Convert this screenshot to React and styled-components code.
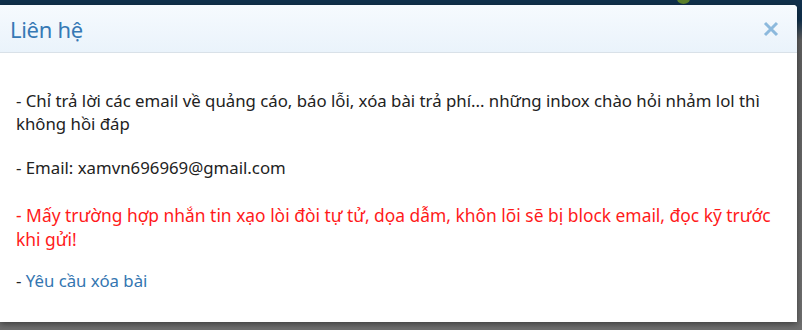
import React from "react";
import styled, { createGlobalStyle } from "styled-components";

const GlobalStyle = createGlobalStyle`
  html, body {
    margin: 0;
    padding: 0;
    background: #6d6d6d;
    font-family: "Noto Sans", "Liberation Sans", sans-serif;
  }
`;

const Page = styled.div`
  width: 802px;
  height: 330px;
  overflow: hidden;
  display: flex;
  flex-direction: column;
  background: linear-gradient(#10304c 0, #10304c 20px, #5e5e5e 40px, #6f6f6f 100%);
  position: relative;
`;

const TopBar = styled.div`
  height: 5px;
  flex: none;
  position: relative;
`;

const Avatar = styled.div`
  position: absolute;
  left: 677px;
  top: -6px;
  width: 13px;
  height: 10px;
  border-radius: 50%;
  background: #5b7f2a;
`;

const Dialog = styled.div`
  width: 797px;
  background: #fff;
  border-radius: 0 4px 0 0;
  box-shadow: 0 2px 6px rgba(0, 0, 0, 0.45);
  display: flex;
  flex-direction: column;
`;

const Header = styled.div`
  height: 47px;
  display: flex;
  align-items: center;
  justify-content: space-between;
  padding: 0 18px 0 10px;
  background: linear-gradient(#f6fafe, #eaf3fb);
  border-bottom: 1px solid #d9e1e8;
  border-radius: 0 4px 0 0;
`;

const Title = styled.h3`
  margin: 0;
  font-size: 22px;
  font-weight: 400;
  letter-spacing: -0.3px;
  color: #3679b5;
`;

const Close = styled.button`
  border: 0;
  background: none;
  padding: 0;
  width: 16px;
  height: 16px;
  display: flex;
  cursor: pointer;
`;

const Body = styled.div`
  padding: 36px 16px 30px;
  font-size: 16.8px;
  line-height: 23px;
  color: #222;
`;

const Para = styled.p`
  margin: ${(p) => (p.$warn ? "24px 0 18px" : "0 0 21px")};
  font-size: ${(p) => (p.$warn ? "17.4px" : "inherit")};
  line-height: ${(p) => (p.$warn ? "24px" : "inherit")};
  color: ${(p) => (p.$warn ? "#ff1a1a" : "#222")};
  &:last-child {
    margin-bottom: 0;
  }
`;

const Link = styled.a`
  color: #3476b1;
  text-decoration: none;
`;

export default function App() {
  return (
    <>
      <GlobalStyle />
      <Page>
        <TopBar>
          <Avatar />
        </TopBar>
        <Dialog>
          <Header>
            <Title>Liên hệ</Title>
            <Close aria-label="close">
              <svg width="16" height="16" viewBox="0 0 16 16">
                <path d="M2 2 L14 14 M14 2 L2 14" stroke="#8cb9dd" strokeWidth="3" />
              </svg>
            </Close>
          </Header>
          <Body>
            <Para>
              - Chỉ trả lời các email về quảng cáo, báo lỗi, xóa bài trả phí... những inbox chào hỏi nhảm lol thì không hồi đáp
            </Para>
            <Para>- Email: xamvn696969@gmail.com</Para>
            <Para $warn>
              - Mấy trường hợp nhắn tin xạo lòi đòi tự tử, dọa dẫm, khôn lõi sẽ bị block email, đọc kỹ trước khi gửi!
            </Para>
            <Para>
              - <Link href="#">Yêu cầu xóa bài</Link>
            </Para>
          </Body>
        </Dialog>
      </Page>
    </>
  );
}
